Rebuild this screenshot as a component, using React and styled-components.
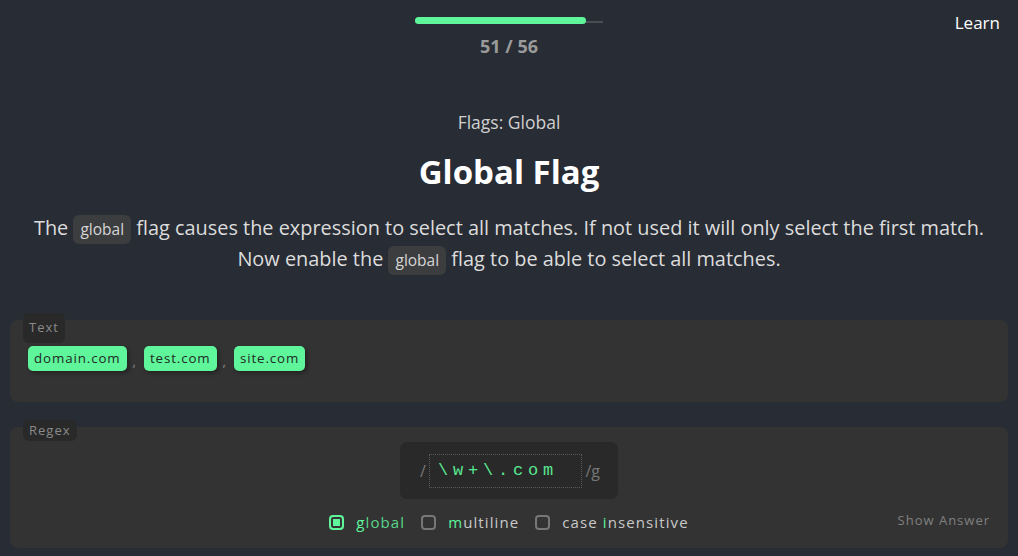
import React from 'react'
import styled, { createGlobalStyle } from 'styled-components'

const GREEN = '#5ff59b'

const GlobalStyle = createGlobalStyle`
  html, body {
    margin: 0;
    background: #282c34;
    font-family: "Open Sans", "Liberation Sans", sans-serif;
  }
`

function Checkbox({ checked, label, hot }) {
  const i = label.indexOf(hot)
  return (
    <FlagItem>
      <Box checked={checked} />
      <FlagLabel checked={checked}>
        {label.slice(0, i)}
        <Hot>{hot}</Hot>
        {label.slice(i + 1)}
      </FlagLabel>
    </FlagItem>
  )
}

export default function App() {
  const step = 51
  const total = 56
  return (
    <Page>
      <GlobalStyle />
      <Header>
        <span />
        <Progress>
          <Track>
            <Fill style={{ width: `${(step / total) * 100}%` }} />
          </Track>
          <Count>{step} / {total}</Count>
        </Progress>
        <Learn>Learn</Learn>
      </Header>

      <Intro>
        <Section>Flags: Global</Section>
        <Title>Global Flag</Title>
        <Desc>
          The <Code>global</Code> flag causes the expression to select all matches. If not used it will only select the first match.
          <br />
          Now enable the <Code>global</Code> flag to be able to select all matches.
        </Desc>
      </Intro>

      <Panel pad="26px 18px 31px">
        <Label tall>Text</Label>
        <Matches>
          <Match>domain.com</Match>
          <Sep>,</Sep>
          <Match>test.com</Match>
          <Sep>,</Sep>
          <Match>site.com</Match>
        </Matches>
      </Panel>

      <Panel pad="15px 18px 16px">
        <Label>Regex</Label>
        <RegexBox>
          <Slash>/</Slash>
          <Input>\w+\.com</Input>
          <Slash>/g</Slash>
        </RegexBox>
        <FlagsRow>
          <span />
          <Flags>
            <Checkbox checked label="global" hot="g" />
            <Checkbox label="multiline" hot="m" />
            <Checkbox label="case insensitive" hot="i" />
          </Flags>
          <ShowAnswer>Show Answer</ShowAnswer>
        </FlagsRow>
      </Panel>
    </Page>
  )
}

const Page = styled.div`
  width: 1018px;
  height: 556px;
  overflow: hidden;
  display: flex;
  flex-direction: column;
`

const Header = styled.header`
  display: grid;
  grid-template-columns: 1fr 188px 1fr;
  padding-top: 17px;
`

const Progress = styled.div`
  display: flex;
  flex-direction: column;
  align-items: center;
`

const Track = styled.div`
  position: relative;
  width: 188px;
  height: 7px;
  display: flex;
  align-items: center;
  &::before {
    content: '';
    position: absolute;
    left: 0;
    right: 0;
    top: 4px;
    height: 2px;
    background: #4a4d52;
  }
`

const Fill = styled.div`
  position: relative;
  height: 7px;
  border-radius: 4px;
  background: ${GREEN};
`

const Count = styled.div`
  margin-top: 10px;
  font-size: 18px;
  font-weight: 700;
  color: #9a9a9a;
  line-height: 24px;
`

const Learn = styled.div`
  justify-self: end;
  margin-top: -6px;
  padding-right: 18px;
  font-size: 17px;
  color: #fff;
  line-height: 24px;
`

const Intro = styled.div`
  text-align: center;
  margin-top: 52px;
`

const Section = styled.div`
  font-size: 17.5px;
  line-height: 24px;
  color: #d0d0d0;
`

const Title = styled.h1`
  margin: 16px 0 0;
  font-size: 33px;
  line-height: 44px;
  font-weight: 700;
  color: #fff;
`

const Desc = styled.p`
  margin: 18px 0 0;
  font-size: 19.9px;
  line-height: 31px;
  color: #dcdcdc;
`

const Code = styled.code`
  font-family: "Open Sans", "Liberation Sans", sans-serif;
  font-size: 15.5px;
  line-height: 1;
  background: #3c3d3f;
  color: #d6d6d6;
  border-radius: 6px;
  padding: 3px 7px 4px;
`

const Panel = styled.section`
  position: relative;
  margin: 0 10px;
  background: #333333;
  border-radius: 8px;
  padding: ${p => p.pad};
  & + & {
    margin-top: 25px;
  }
  &:first-of-type {
    margin-top: 46px;
  }
`

const Label = styled.div`
  position: absolute;
  left: 13px;
  top: -7px;
  background: #292929;
  color: #8a8a8a;
  font-size: 13px;
  letter-spacing: 1px;
  line-height: 20px;
  padding: ${p => (p.tall ? '4px 6px 6px' : '0 6px 1px')};
  border-radius: 6px;
`

const Matches = styled.div`
  display: flex;
  align-items: flex-end;
  gap: 6px;
`

const Match = styled.span`
  background: ${GREEN};
  color: #1e2a24;
  font-size: 13.3px;
  letter-spacing: 0.9px;
  line-height: 25px;
  padding: 0 6px;
  border-radius: 5px;
  box-shadow: 2px 2px 4px rgba(0, 0, 0, 0.35);
`

const Sep = styled.span`
  color: #888;
  font-size: 13px;
  line-height: 20px;
  margin-right: 2px;
`

const RegexBox = styled.div`
  width: 218px;
  height: 57px;
  margin: 0 auto;
  box-sizing: border-box;
  background: #292929;
  border-radius: 7px;
  display: flex;
  align-items: center;
  padding: 0 18px 0 20px;
  gap: 3px;
`

const Slash = styled.span`
  color: #777;
  font-size: 16px;
  font-family: "Open Sans", sans-serif;
`

const Input = styled.div`
  flex: 1;
  height: 34px;
  box-sizing: border-box;
  border: 1px dotted #5a5a5a;
  display: flex;
  align-items: center;
  padding-left: 8px;
  color: #58e891;
  font-family: "Liberation Mono", "DejaVu Sans Mono", monospace;
  font-size: 17px;
  letter-spacing: 4.8px;
`

const FlagsRow = styled.div`
  display: grid;
  grid-template-columns: 1fr auto 1fr;
  align-items: center;
  margin-top: 13px;
`

const Flags = styled.div`
  display: flex;
  gap: 16px;
`

const FlagItem = styled.label`
  display: flex;
  align-items: center;
  gap: 12px;
`

const Box = styled.span`
  width: 15px;
  height: 15px;
  box-sizing: border-box;
  border-radius: 4px;
  border: 2px solid ${p => (p.checked ? GREEN : '#777')};
  box-shadow: ${p => (p.checked ? `inset 0 0 0 2px #333, inset 0 0 0 6px ${GREEN}` : 'none')};
`

const FlagLabel = styled.span`
  font-size: 15px;
  letter-spacing: 1.1px;
  line-height: 20px;
  color: ${p => (p.checked ? '#59d58a' : '#c9c9c9')};
`

const Hot = styled.span`
  color: ${GREEN};
`

const ShowAnswer = styled.div`
  justify-self: end;
  font-size: 13px;
  letter-spacing: 1px;
  color: #808080;
  margin-top: -4px;
`
